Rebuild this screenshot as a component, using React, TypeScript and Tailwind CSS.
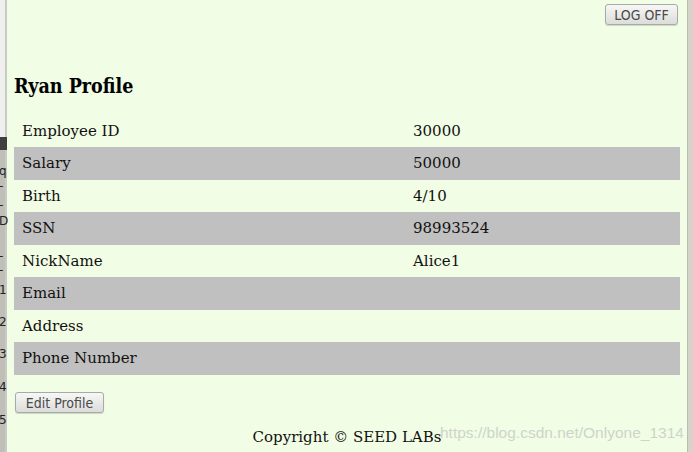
import React from "react";

const rows: [string, string][] = [
  ["Employee ID", "30000"],
  ["Salary", "50000"],
  ["Birth", "4/10"],
  ["SSN", "98993524"],
  ["NickName", "Alice1"],
  ["Email", ""],
  ["Address", ""],
  ["Phone Number", ""],
];

const sideMarks = [
  { top: 165, ch: "q" },
  { top: 180, ch: "-" },
  { top: 199, ch: "-" },
  { top: 215, ch: "D" },
  { top: 250, ch: "-" },
  { top: 264, ch: "-" },
  { top: 284, ch: "1" },
  { top: 316, ch: "2" },
  { top: 348, ch: "3" },
  { top: 381, ch: "4" },
  { top: 414, ch: "5" },
];

const btn =
  "rounded-[3px] border border-[#a9a9a9] bg-gradient-to-b from-[#f7f7f6] to-[#dcdcda] text-[#4a4a4a] text-[14px] leading-none shadow-[0_1px_1px_rgba(0,0,0,0.15)] [font-family:'DejaVu_Sans_Condensed','DejaVu_Sans',sans-serif] [font-stretch:condensed]";

const App: React.FC = () => {
  return (
    <div className="flex h-[452px] w-[693px] overflow-hidden bg-[#f1fde4] [font-family:'DejaVu_Serif',serif]">
      {/* left edge of the window behind */}
      <div className="relative flex w-[7px] shrink-0 flex-col">
        <div className="h-[137px] border-r-2 border-[#c9c9c6] bg-[#efefed]" />
        <div className="h-[13px] bg-[#404040]" />
        <div className="flex-1 border-r-2 border-[#c9c9c6] bg-[#bfbeb7]" />
        {sideMarks.map((m, i) => (
          <span
            key={i}
            className="absolute left-[-1px] text-[12px] leading-none text-[#222] [font-family:'DejaVu_Sans',sans-serif]"
            style={{ top: m.top }}
          >
            {m.ch}
          </span>
        ))}
      </div>

      {/* main page */}
      <div className="relative flex flex-1 flex-col px-[7px]">
        <div className="flex justify-end pt-[4px] pr-[2px]">
          <button className={`${btn} h-[21px] w-[73px]`}>LOG OFF</button>
        </div>

        <h2 className="mt-[52px] text-[19.5px] font-bold leading-none text-black [font-stretch:condensed] [font-family:'DejaVu_Serif_Condensed','DejaVu_Serif',serif]">
          Ryan Profile
        </h2>

        <div className="mt-[18px] flex flex-col text-[15px] text-[#111]">
          {rows.map(([label, value], i) => (
            <div
              key={label}
              className={`grid h-[32.5px] grid-cols-[399px_1fr] items-center ${
                i % 2 === 1 ? "bg-[#c0c0c0]" : ""
              }`}
            >
              <span className="pl-[8px]">{label}</span>
              <span>{value}</span>
            </div>
          ))}
        </div>

        <div className="mt-[16px]">
          <button className={`${btn} ml-[1px] h-[21px] w-[89px]`}>Edit Profile</button>
        </div>

        <p className="mt-[15px] text-center text-[15px] leading-none text-[#111]">
          Copyright © SEED LABs
        </p>

        <span className="absolute left-[433px] top-[425px] text-[15.5px] leading-none text-[#d0d3cc] [font-family:'Liberation_Sans',sans-serif]">
          https://blog.csdn.net/Onlyone_1314
        </span>
      </div>

      {/* right edge */}
      <div className="w-[6px] shrink-0 border-l border-[#bdbcb2] bg-[#d6d4ca]" />
    </div>
  );
};

export default App;
